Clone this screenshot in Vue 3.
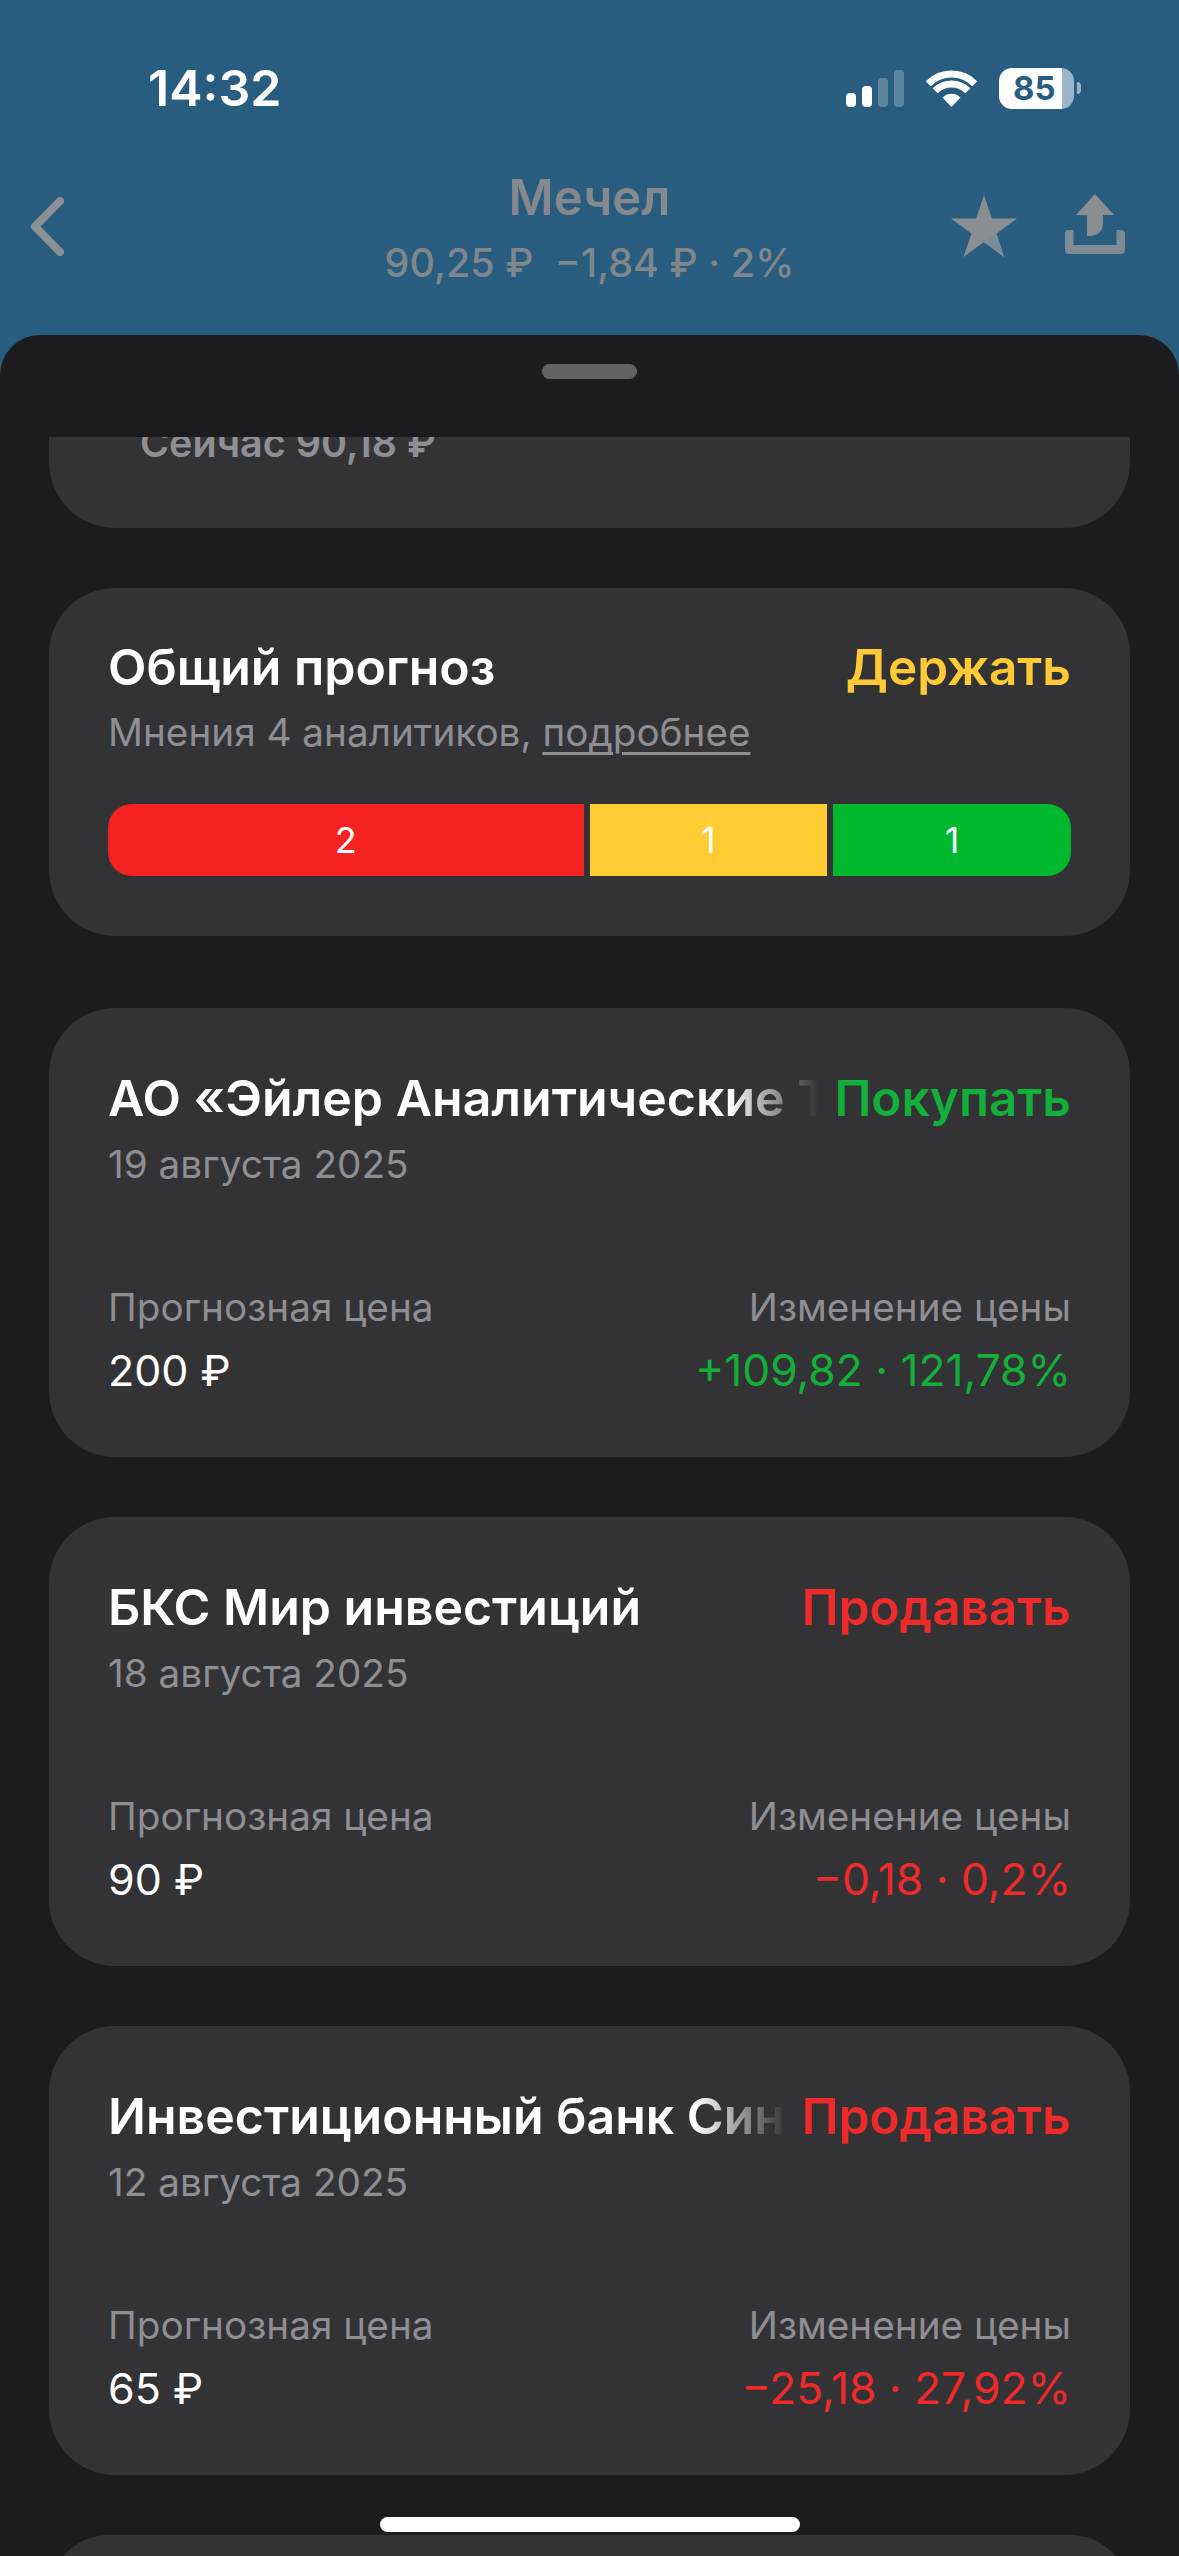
<template>
  <div class="screen">
    <header class="top">
      <div class="status">
        <span class="time">14:32</span>
        <div class="status-icons">
          <div class="signal">
            <i class="bar on h1"></i>
            <i class="bar on h2"></i>
            <i class="bar h3"></i>
            <i class="bar h4"></i>
          </div>
          <svg class="wifi" viewBox="0 0 51 37" width="51" height="37">
            <path d="M2.2 13.7A33 33 0 0 1 48.8 13.7" fill="none" stroke="#fff" stroke-width="7" />
            <path d="M9.2 20.7A23 23 0 0 1 41.8 20.7" fill="none" stroke="#fff" stroke-width="7" />
            <path d="M25.5 37L16.5 27.5A12.5 12.5 0 0 1 34.5 27.5Z" fill="#fff" />
          </svg>
          <div class="battery">
            <div class="battery-body"><span>85</span></div>
            <i class="battery-tip"></i>
          </div>
        </div>
      </div>
      <div class="nav">
        <svg class="back" viewBox="0 0 34 59" width="34" height="59">
          <path d="M30 4L5 29.5L30 55" fill="none" stroke="#8b9094" stroke-width="8" stroke-linecap="round" stroke-linejoin="round" />
        </svg>
        <div class="nav-title">
          <div class="name">Мечел</div>
          <div class="quote">90,25 ₽&nbsp; −1,84 ₽ · 2%</div>
        </div>
        <div class="nav-actions">
          <svg class="star" viewBox="0 0 66 62" width="66" height="62">
            <path d="M33 0L41 23.5H66L45.6 38.5L53 62L33 47L12.5 62L20.4 38.5L0 23.5H25Z" fill="#8b8e91" />
            <path d="M41 41L45.6 38.5L53 62L33 47Z" fill="#7b8d9b" />
          </svg>
          <svg class="share" viewBox="0 0 60 60" width="60" height="60">
            <path d="M30 0L49 21H38V28Q38 42 24 42H22V21H11Z" fill="#8b8e91" />
            <path d="M4 36H8.5V51H51.5V36H56Q60 36 60 40V56Q60 60 56 60H4Q0 60 0 56V40Q0 36 4 36Z" fill="#7e8a94" />
          </svg>
        </div>
      </div>
    </header>

    <section class="sheet">
      <div class="grip-row"><div class="grip"></div></div>
      <div class="scroll">
        <div class="card card-now">
          <div class="now-text">Сейчас 90,18 ₽</div>
        </div>

        <div class="card card-total">
          <div class="row">
            <div class="title plain">Общий прогноз</div>
            <div class="verdict hold">Держать</div>
          </div>
          <div class="muted sub">Мнения 4 аналитиков, <u>подробнее</u></div>
          <div class="split">
            <div v-for="s in split" :key="s.cls" class="seg" :class="s.cls" :style="{ flexGrow: s.n }">{{ s.n }}</div>
          </div>
        </div>

        <div v-for="a in analysts" :key="a.name" class="card card-item">
          <div class="row">
            <div class="title fade">{{ a.name }}</div>
            <div class="verdict" :class="a.kind">{{ a.verdict }}</div>
          </div>
          <div class="muted date">{{ a.date }}</div>
          <div class="row prices">
            <div>
              <div class="muted">Прогнозная цена</div>
              <div class="value price">{{ a.price }}</div>
            </div>
            <div class="right">
              <div class="muted">Изменение цены</div>
              <div class="value" :class="a.kind">{{ a.change }}</div>
            </div>
          </div>
        </div>

        <div class="card card-tail"></div>
      </div>
      <div class="home"></div>
    </section>
  </div>
</template>

<script setup>
const split = [
  { cls: 'sell', n: 2 },
  { cls: 'hold-bg', n: 1 },
  { cls: 'buy', n: 1 },
]

const analysts = [
  { name: 'АО «Эйлер Аналитические Технологии»', date: '19 августа 2025', verdict: 'Покупать', kind: 'up', price: '200 ₽', change: '+109,82 · 121,78%' },
  { name: 'БКС Мир инвестиций', date: '18 августа 2025', verdict: 'Продавать', kind: 'down', price: '90 ₽', change: '−0,18 · 0,2%' },
  { name: 'Инвестиционный банк Синара', date: '12 августа 2025', verdict: 'Продавать', kind: 'down', price: '65 ₽', change: '−25,18 · 27,92%' },
]
</script>

<style>
html, body { margin: 0; background: #295d7f; }
</style>

<style scoped>
* { box-sizing: border-box; }

.screen {
  width: 1179px;
  height: 2556px;
  overflow: hidden;
  background: #295d7f;
  font-family: Inter, "Noto Sans", sans-serif;
  display: flex;
  flex-direction: column;
}

.top { height: 335px; flex: none; }

.status {
  height: 170px;
  padding: 58px 98px 0 148px;
  display: flex;
  justify-content: space-between;
  align-items: flex-start;
}
.time { font-size: 50px; line-height: 60px; font-weight: 600; color: #fff; }
.status-icons { display: flex; align-items: center; height: 60px; }
.signal { display: flex; align-items: flex-end; gap: 6px; height: 37px; }
.bar { display: block; width: 10px; border-radius: 4px; background: rgba(255,255,255,0.25); }
.bar.on { background: #fff; }
.h1 { height: 14px; }
.h2 { height: 21px; }
.h3 { height: 29px; }
.h4 { height: 37px; }
.wifi { margin-left: 22px; }
.battery { margin-left: 22px; display: flex; align-items: center; gap: 3px; }
.battery-body {
  width: 75px;
  height: 41px;
  border-radius: 13px;
  background: linear-gradient(90deg, #fff 84%, #9db4c6 84%);
  display: flex;
  align-items: center;
  padding-left: 14px;
}
.battery-body span { font-size: 33px; font-weight: 700; color: #295d7f; line-height: 41px; }
.battery-tip { display: block; width: 4px; height: 12px; border-radius: 0 4px 4px 0; background: #9db4c6; }

.nav {
  display: grid;
  grid-template-columns: 1fr auto 1fr;
  padding: 0 30px;
}
.back { margin-top: 27px; }
.nav-title { text-align: center; }
.name { font-size: 49px; line-height: 56px; font-weight: 600; color: #85898d; }
.quote { margin-top: 14px; font-size: 39.5px; line-height: 46px; font-weight: 500; color: #7f878d; white-space: nowrap; }
.nav-actions { display: flex; justify-content: flex-end; gap: 48px; align-items: flex-start; padding-right: 24px; }
.star { margin-top: 25px; }
.share { margin-top: 24px; }

.sheet {
  flex: 1;
  min-height: 0;
  position: relative;
  background: #1c1c1e;
  border-radius: 40px 40px 0 0;
  display: flex;
  flex-direction: column;
}
.grip-row { height: 102px; flex: none; padding-top: 29px; display: flex; justify-content: center; }
.grip { width: 95px; height: 15px; border-radius: 8px; background: #636366; }
.scroll { flex: 1; min-height: 0; overflow: hidden; padding: 0 49px; }

.card {
  background: #333336;
  border-radius: 66px;
  padding: 0 59px;
}
.card-now {
  height: 91px;
  overflow: hidden;
  border-radius: 0 0 66px 66px;
  padding: 0 91px;
  margin-bottom: 60px;
}
.now-text { margin-top: -17px; font-size: 39.5px; line-height: 46px; font-weight: 600; color: #8e8e93; white-space: nowrap; }

.card-total { height: 348px; padding-top: 49px; margin-bottom: 72px; }
.card-item { height: 449px; padding-top: 60px; margin-bottom: 60px; }
.card-tail { height: 120px; }

.row { display: flex; justify-content: space-between; gap: 16px; }
.title {
  flex: 1;
  min-width: 0;
  font-size: 50px;
  line-height: 60px;
  font-weight: 600;
  color: #fff;
  white-space: nowrap;
  overflow: hidden;
}
.title.fade {
  -webkit-mask-image: linear-gradient(90deg, #000 calc(100% - 90px), transparent 100%);
  mask-image: linear-gradient(90deg, #000 calc(100% - 90px), transparent 100%);
}
.verdict { flex: none; font-size: 49.5px; line-height: 60px; font-weight: 600; }
.hold { color: #ffca35; }
.up { color: #12b03a; }
.down { color: #ee2a2a; }

.muted { font-size: 38.7px; line-height: 48px; color: #8e8e93; white-space: nowrap; }
.sub { margin-top: 11px; }
.sub u { text-underline-offset: 6px; text-decoration-thickness: 3px; }
.date { margin-top: 12px; }

.split { display: flex; gap: 6px; height: 72px; margin-top: 48px; border-radius: 24px; overflow: hidden; }
.seg {
  flex: 1 1 0;
  display: flex;
  align-items: center;
  justify-content: center;
  font-size: 36px;
  color: #fff;
}
.sell { background: #f72323; }
.hold-bg { background: #ffcc33; }
.buy { background: #00b92f; }

.prices { margin-top: 95px; }
.right { text-align: right; }
.value { margin-top: 11px; font-size: 44.3px; line-height: 56px; color: #fff; white-space: nowrap; }
.value.price { font-size: 43px; }
.value.up { color: #12b03a; }
.value.down { color: #ee2a2a; }

.home {
  position: absolute;
  left: 380px;
  bottom: 24px;
  width: 420px;
  height: 15px;
  border-radius: 8px;
  background: #fff;
}
</style>
